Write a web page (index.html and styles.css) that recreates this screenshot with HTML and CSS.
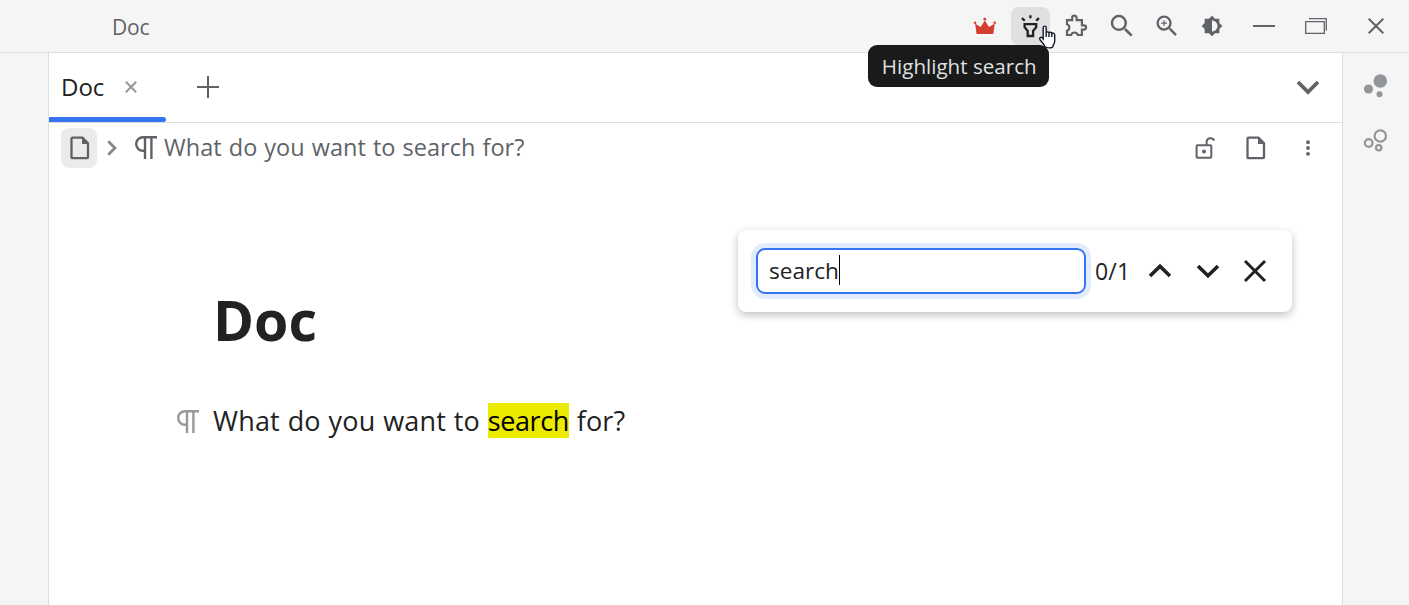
FILE: index.html
```html
<!DOCTYPE html>
<html lang="en">
<head>
<meta charset="utf-8">
<title>Doc</title>
<link rel="stylesheet" href="styles.css">
</head>
<body>
<div class="app">
  <header class="toolbar">
    <div class="toolbar__title">Doc</div>
    <div class="toolbar__item"><svg class="crown" width="24" height="24" viewBox="0 0 24 24"><path d="M3.6 20 2.1 9.5 7.6 13 11.8 6.5 16 13l5.8-3.5L20.3 20z"/><circle cx="2.1" cy="8.8" r="1.3"/><circle cx="11.8" cy="5.2" r="1.4"/><circle cx="21.7" cy="8.8" r="1.3"/></svg></div>
    <div class="toolbar__item"><div class="toolbar__button">
      <svg class="line line--dark" width="23" height="24" viewBox="0 0 23 24"><path d="M5.6 10.2H17.2V13.2L14.1 17V22H8.7V17L5.6 13.2zM11.4 1.2V4.3M3 4.1l2.7 2.7M19.9 4.1l-2.7 2.7"/></svg>
      <div class="tooltip">Highlight search</div>
      <svg class="cursor" width="20" height="26" viewBox="0 0 20 26"><path d="M6.2 2.4C6.2.7 9.2.7 9.2 2.4V8c0-1.5 2.6-1.4 2.8 0 .4-1.2 2.6-1 2.8.5.6-1 2.9-.6 2.9 1.3v6.2c0 2.6-1.7 3.7-1.9 5.7-.3 1.6-6.8 1.6-7.8-.2-.8-2.2-3.1-4.5-5-6.8-1.2-1.6.7-3.3 2.4-1.7l.8.9z"/><path d="M9.2 7.5V12M12 8V12M14.8 8.5V12"/></svg>
    </div></div>
    <div class="toolbar__item"><svg class="line line--piece" width="24" height="24" viewBox="0 0 24 24"><path d="M3 6.1h5.2V3.9a2.2 2.2 0 0 1 4.4 0v2.2h5.3v5.3H20a2.1 2.1 0 0 1 0 4.2h-2.1V21h-4.1a3.5 3.5 0 0 0-6.7 0H3v-4.1a3.5 3.5 0 0 0 0-6.6z"/></svg></div>
    <div class="toolbar__item"><svg class="solid" width="30" height="30" viewBox="0 0 24 24"><path d="M15.5 14h-.79l-.28-.27A6.471 6.471 0 0 0 16 9.5 6.5 6.5 0 1 0 9.5 16c1.61 0 3.09-.59 4.23-1.57l.27.28v.79l5 4.99L20.49 19l-4.99-5zm-6 0C7.01 14 5 11.99 5 9.5S7.01 5 9.5 5 14 7.01 14 9.5 11.99 14 9.5 14z"/></svg></div>
    <div class="toolbar__item"><svg class="solid" width="28" height="28" viewBox="0 0 24 24"><path d="M15.5 14h-.79l-.28-.27A6.471 6.471 0 0 0 16 9.5 6.5 6.5 0 1 0 9.5 16c1.61 0 3.09-.59 4.23-1.57l.27.28v.79l5 4.99L20.49 19l-4.99-5zm-6 0C7.01 14 5 11.99 5 9.5S7.01 5 9.5 5 14 7.01 14 9.5 11.99 14 9.5 14zm2.5-4h-2v2H9v-2H7V9h2V7h1v2h2v1z"/></svg></div>
    <div class="toolbar__item"><svg class="solid" width="22" height="22" viewBox="0 0 24 24"><path d="M20 15.31L23.31 12 20 8.69V4h-4.69L12 .69 8.69 4H4v4.69L.69 12 4 15.31V20h4.69L12 23.31 15.31 20H20v-4.69zM12 18V6c3.31 0 6 2.69 6 6s-2.69 6-6 6z"/></svg></div>
    <div class="toolbar__item toolbar__item--min"><svg class="line" width="22" height="22" viewBox="0 0 22 22"><path d="M0 11H22"/></svg></div>
    <div class="toolbar__item toolbar__item--max"><svg class="line line--thin" width="22" height="18" viewBox="0 0 22 18"><path d="M.7 4.7H19.3V16.3H.7zM4 1.6H21.3V13.5"/></svg></div>
    <div class="toolbar__item toolbar__item--close"><svg class="line" width="16" height="16" viewBox="0 0 16 16"><path d="M.7.7 15.3 15.3M15.3.7.7 15.3"/></svg></div>
  </header>
  <div class="workspace">
    <aside class="dock"></aside>
    <main class="pane">
      <nav class="tabs">
        <div class="tab">
          <span class="tab__label">Doc</span>
          <svg class="line line--muted" width="12" height="12" viewBox="0 0 12 12"><path d="M.8.8 11.2 11.2M11.2.8.8 11.2"/></svg>
        </div>
        <svg class="line tabs__add" width="22" height="22" viewBox="0 0 22 22"><path d="M11 0V22M0 11H22"/></svg>
        <svg class="line tabs__more" width="24" height="16" viewBox="0 0 24 16"><path d="M2 2 12 12 22 2"/></svg>
      </nav>
      <div class="crumbs">
        <div class="crumbs__doc"><svg class="line line--page" width="20" height="24" viewBox="0 0 20 24"><path d="M2.5 1.7H12.4L18 7.3V21.2Q18 22.2 17 22.2H2.5Q1.5 22.2 1.5 21.2V2.7Q1.5 1.7 2.5 1.7z"/><path class="fold" d="M12 1V8H19z"/></svg></div>
        <svg class="line line--arrow" width="10" height="16" viewBox="0 0 10 16"><path d="M1.2 1.2 8 8 1.2 14.8"/></svg>
        <svg class="line line--mark crumbs__mark" width="22" height="23" viewBox="0 0 22 23"><path d="M22 1.2H8a6.8 6.8 0 0 0 0 13.6H10M10 1V23M16.4 1V23"/></svg>
        <span class="crumbs__text">What do you want to search for?</span>
        <div class="crumbs__actions">
          <svg class="line" width="20" height="24" viewBox="0 0 20 24"><path d="M2.6 9.3H15.3Q16.3 9.3 16.3 10.3V20.7Q16.3 21.7 15.3 21.7H2.6Q1.6 21.7 1.6 20.7V10.3Q1.6 9.3 2.6 9.3zM11.6 9V5.8a3.9 3.9 0 0 1 7.5-1.2"/><circle class="fold" cx="9" cy="15.5" r="2"/></svg>
          <svg class="line line--page" width="20" height="24" viewBox="0 0 20 24"><path d="M2.5 1.7H12.4L18 7.3V21.2Q18 22.2 17 22.2H2.5Q1.5 22.2 1.5 21.2V2.7Q1.5 1.7 2.5 1.7z"/><path class="fold" d="M12 1V8H19z"/></svg>
          <svg class="solid crumbs__menu" width="6" height="18" viewBox="0 0 6 18"><circle cx="3" cy="3.2" r="1.9"/><circle cx="3" cy="9" r="1.9"/><circle cx="3" cy="14.8" r="1.9"/></svg>
        </div>
      </div>
      <article class="editor">
        <h1 class="editor__title">Doc</h1>
        <div class="block">
          <svg class="line line--muted line--mark" width="22" height="23" viewBox="0 0 22 23"><path d="M22 1.2H8a6.8 6.8 0 0 0 0 13.6H10M10 1V23M16.4 1V23"/></svg>
          <p class="block__text">What do you want to <mark class="hit">search</mark> for?</p>
        </div>
      </article>
      <div class="find">
        <div class="find__input"><span class="find__value">search</span><span class="find__caret"></span></div>
        <span class="find__count">0/1</span>
        <svg class="line line--bold" width="24" height="16" viewBox="0 0 24 16"><path d="M2 13 12 3.2 22 13"/></svg>
        <svg class="line line--bold" width="24" height="16" viewBox="0 0 24 16"><path d="M2 3 12 12.8 22 3"/></svg>
        <svg class="line line--bold line--close" width="24" height="24" viewBox="0 0 24 24"><path d="M2 2 22 22M22 2 2 22"/></svg>
      </div>
    </main>
    <aside class="dock dock--right">
      <svg class="bubbles" width="24" height="26" viewBox="0 0 24 26"><circle cx="16.3" cy="8" r="6.8"/><circle cx="4.5" cy="16" r="4.6"/><circle cx="15.5" cy="21.3" r="3"/></svg>
      <svg class="bubbles bubbles--ring" width="24" height="26" viewBox="0 0 24 26"><circle cx="16.3" cy="8" r="5.7"/><circle cx="4.7" cy="15" r="3.8"/><circle cx="14.7" cy="19.7" r="2.7"/></svg>
    </aside>
  </div>
</div>
</body>
</html>
```
FILE: styles.css
```css
* { box-sizing: border-box; }
body {
  margin: 0;
  font-family: "Open Sans", "Noto Sans", sans-serif;
  color: #222;
  background: #fff;
}
svg { display: block; flex: none; overflow: visible; }
.app { display: flex; flex-direction: column; width: 1409px; height: 605px; overflow: hidden; }

.line { fill: none; stroke: #5f6368; stroke-width: 2; }
.line--dark { stroke: #222; stroke-width: 2.3; }
.line--piece { stroke-width: 2.2; }
.line--page { stroke-width: 2.3; }
.line--thin { stroke-width: 1.3; }
.line--muted { stroke: #95989c; }
.line--mark { stroke-width: 2.4; }
.line--arrow { stroke: #85898d; stroke-width: 2.8; }
.line--bold { stroke: #222; stroke-width: 3.6; }
.line--close { stroke-width: 3; }
.solid { fill: #5f6368; }
.fold { fill: #5f6368; stroke: none; }

.toolbar {
  display: flex;
  align-items: center;
  height: 53px;
  background: #f5f5f5;
  border-bottom: 1px solid #dedede;
}
.toolbar__title {
  flex: 1;
  padding: 1px 0 0 112px;
  font-size: 21px;
  letter-spacing: -0.2px;
  line-height: 30px;
  color: #5f6368;
}
.toolbar__item { display: flex; flex: none; justify-content: center; align-items: center; width: 45.4px; height: 52px; }
.toolbar__item--min { width: 59px; padding-right: 1px; }
.toolbar__item--max { width: 44px; }
.toolbar__item--close { width: 71px; padding-left: 5px; }
.toolbar__button {
  position: relative;
  display: flex;
  justify-content: center;
  align-items: center;
  width: 39px;
  height: 38px;
  border-radius: 8px;
  background: #dfe0e1;
}
.crown { fill: #d23f31; }
.tooltip {
  position: absolute;
  right: 1px;
  top: 38px;
  z-index: 2;
  width: 181px;
  height: 42px;
  padding-left: 1px;
  border-radius: 9px;
  background: #1a1a1a;
  color: #dfe0e1;
  font-size: 20.6px;
  line-height: 43px;
  text-align: center;
  white-space: nowrap;
}
.cursor { position: absolute; left: 25.5px; top: 17.5px; z-index: 3; fill: #fff; stroke: #15172a; stroke-width: 1.4; }

.workspace { display: flex; flex: 1; min-height: 0; }
.dock { width: 49px; background: #f5f5f5; border-right: 1px solid #dedede; }
.dock--right {
  display: flex;
  flex-direction: column;
  gap: 29px;
  width: 67px;
  padding: 20px 0 0 21px;
  border-right: 0;
  border-left: 1px solid #dedede;
}
.bubbles { fill: #929599; }
.bubbles--ring { fill: none; stroke: #929599; stroke-width: 2.2; }
.pane { position: relative; flex: 1; background: #fff; }

.tabs { display: flex; align-items: center; height: 70px; border-bottom: 1px solid #dedede; }
.tab {
  display: flex;
  align-items: center;
  width: 117px;
  height: 69px;
  padding: 0 0 1px 12px;
  position: relative;
}
.tab::after {
  content: "";
  position: absolute;
  left: 0;
  bottom: 0;
  width: 117px;
  height: 5px;
  border-radius: 0 3px 3px 0;
  background: #3573f0;
}
.tab__label { width: 64px; font-size: 24px; line-height: 34px; }
.tabs__add { margin: 0 0 1px 31px; }
.tabs__more { margin-left: auto; margin-right: 22px; stroke-width: 3.8; }

.crumbs { display: flex; align-items: center; height: 49px; padding-left: 12px; }
.crumbs__doc {
  display: flex;
  align-items: center;
  justify-content: center;
  width: 36px;
  height: 40px;
  margin: 1px 10px 0 0;
  padding-left: 1px;
  border-radius: 8px;
  background: #ebebeb;
}
.crumbs__mark { margin: 0 7px 0 18px; }
.crumbs__text { padding-bottom: 1px; font-size: 23.5px; letter-spacing: .05px; word-spacing: .8px; line-height: 34px; color: #5f6368; white-space: nowrap; }
.crumbs__actions { display: flex; align-items: center; gap: 31px; margin-left: auto; padding-right: 31px; }
.crumbs__menu { margin-left: 8px; }

.editor { padding: 108px 0 0 128px; }
.editor__title { margin: 0 0 0 36px; font-size: 55.5px; font-weight: 700; line-height: 80px; }
.block { display: flex; align-items: center; gap: 14px; margin-top: 40px; }
.block__text { margin: 0; font-size: 27px; letter-spacing: .2px; word-spacing: .5px; line-height: 42px; white-space: nowrap; }
.hit { display: inline-block; height: 35px; line-height: 36px; letter-spacing: -0.4px; background: #ebeb00; color: #000; vertical-align: baseline; }

.find {
  position: absolute;
  left: 689px;
  top: 177px;
  display: flex;
  align-items: center;
  width: 554px;
  height: 82px;
  padding: 0 25.5px 1px 18px;
  border-radius: 8px;
  background: #fff;
  box-shadow: 0 3px 9px rgba(0, 0, 0, .25);
}
.find__input {
  display: flex;
  align-items: center;
  width: 330px;
  height: 46px;
  margin-top: 1px;
  padding-left: 11px;
  border: 2px solid #3573f0;
  border-radius: 9px;
  box-shadow: 0 0 0 5px #e3ecfd;
}
.find__value { font-size: 22.6px; line-height: 32px; }
.find__caret { width: 1px; height: 30px; margin-bottom: 2px; background: #000; }
.find__count { width: 53px; margin-left: 9px; padding-top: 1px; font-size: 23px; letter-spacing: .2px; line-height: 32px; }
.find__count + svg { margin-right: 24px; }
.find svg:last-child { margin-left: auto; }
```
